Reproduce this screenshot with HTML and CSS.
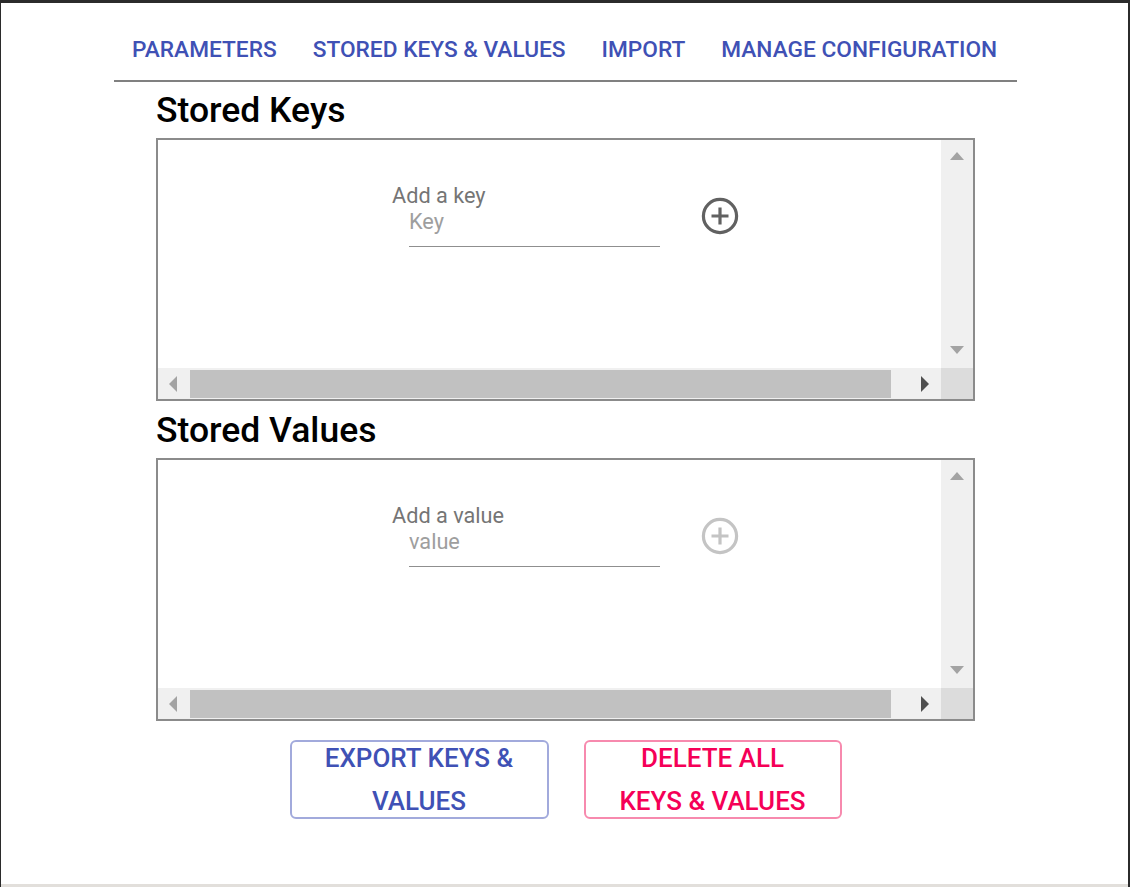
FILE: index.html
```html
<!DOCTYPE html>
<html lang="en">
<head>
<meta charset="utf-8">
<title>Stored Keys &amp; Values</title>
<link rel="stylesheet" href="styles.css">
</head>
<body>
<div class="window">
  <div class="container">
    <nav class="tabs">
      <a class="tab">Parameters</a>
      <a class="tab">Stored Keys &amp; Values</a>
      <a class="tab">Import</a>
      <a class="tab">Manage Configuration</a>
    </nav>
    <main class="content">
      <h2 class="heading heading-first">Stored Keys</h2>
      <div class="scrollbox">
        <div class="scroll-view">
          <div class="entry">
            <div class="field">
              <label class="field-label">Add a key</label>
              <input class="field-input" type="text" placeholder="Key">
            </div>
            <button class="add-btn" type="button" aria-label="Add key">
              <svg class="add-icon" viewBox="0 0 40 40" width="40" height="40"><circle cx="20" cy="20" r="16.6" fill="none" stroke="currentColor" stroke-width="3.2"/><path d="M20 11.5v17M11.5 20h17" stroke="currentColor" stroke-width="3.2" fill="none"/></svg>
            </button>
          </div>
        </div>
        <div class="vscroll"><span class="arr arr-up"></span><span class="arr arr-down"></span></div>
        <div class="hscroll">
          <span class="hbtn"><span class="arr arr-left"></span></span>
          <span class="thumb"></span>
          <span class="hbtn"><span class="arr arr-right"></span></span>
        </div>
        <div class="corner"></div>
      </div>

      <h2 class="heading">Stored Values</h2>
      <div class="scrollbox">
        <div class="scroll-view">
          <div class="entry">
            <div class="field">
              <label class="field-label">Add a value</label>
              <input class="field-input" type="text" placeholder="value">
            </div>
            <button class="add-btn add-btn-disabled" type="button" aria-label="Add value">
              <svg class="add-icon" viewBox="0 0 40 40" width="40" height="40"><circle cx="20" cy="20" r="16.6" fill="none" stroke="currentColor" stroke-width="3.2"/><path d="M20 11.5v17M11.5 20h17" stroke="currentColor" stroke-width="3.2" fill="none"/></svg>
            </button>
          </div>
        </div>
        <div class="vscroll"><span class="arr arr-up"></span><span class="arr arr-down"></span></div>
        <div class="hscroll">
          <span class="hbtn"><span class="arr arr-left"></span></span>
          <span class="thumb"></span>
          <span class="hbtn"><span class="arr arr-right"></span></span>
        </div>
        <div class="corner"></div>
      </div>

      <div class="actions">
        <button class="action action-primary" type="button">Export keys &amp;<br>values</button>
        <button class="action action-danger" type="button">Delete all<br>keys &amp; values</button>
      </div>
    </main>
  </div>
</div>
</body>
</html>
```

FILE: styles.css
```css
html, body {
  margin: 0;
  padding: 0;
}

body {
  background: #2b2b2b;
  font-family: Roboto, "Noto Sans", sans-serif;
}

.window {
  margin: 3px 2px 0 1px;
  height: 881px;
  background: #ffffff;
  border-bottom: 3px solid #e2dfdb;
}

.container {
  width: 903px;
  margin-left: 113px;
}

.tabs {
  display: flex;
  padding-top: 34px;
  border-bottom: 2px solid #808080;
}

.tab {
  flex: none;
  white-space: nowrap;
  padding: 0 18px 17px;
  font-size: 22.7px;
  line-height: 26px;
  font-weight: 500;
  text-transform: uppercase;
  color: #3f51b5;
  cursor: pointer;
}

.content {
  padding: 0 42px;
}

.heading {
  margin: 9px 0 8px;
  font-size: 35.5px;
  line-height: 40px;
  font-weight: 500;
  color: #000;
}

.heading-first {
  margin-top: 8px;
}

.scrollbox {
  height: 263px;
  box-sizing: border-box;
  border: 2px solid #8b8b8b;
  display: grid;
  grid-template-columns: 1fr 32px;
  grid-template-rows: 1fr 31px;
}

.scroll-view {
  overflow: hidden;
}

.entry {
  display: flex;
  align-items: center;
  padding: 44px 0 0 234px;
}

.field {
  width: 268px;
  display: flex;
  flex-direction: column;
}

.field-label {
  font-size: 21.7px;
  line-height: 24px;
  color: #757575;
}

.field-input {
  margin: 2px 0 0 17px;
  width: 251px;
  height: 37px;
  box-sizing: border-box;
  padding: 0 0 13px;
  border: none;
  border-bottom: 1px solid #8f8f8f;
  outline: none;
  background: transparent;
  font-family: inherit;
  font-size: 21.7px;
  line-height: 24px;
  color: #333;
}

.field-input::placeholder {
  color: #9e9e9e;
  opacity: 1;
}

.add-btn {
  margin-left: 40px;
  padding: 0;
  border: none;
  background: none;
  color: #616161;
  display: flex;
  cursor: pointer;
}

.add-btn-disabled {
  color: #c4c4c4;
}

.add-icon {
  display: block;
}

.vscroll {
  background: #f0f0f0;
  display: flex;
  flex-direction: column;
  justify-content: space-between;
  align-items: center;
  padding: 12px 0 14px;
}

.hscroll {
  background: #f0f0f0;
  display: flex;
}

.hbtn {
  width: 32px;
  flex: none;
  display: flex;
  align-items: center;
  justify-content: center;
}

.thumb {
  width: 701px;
  flex: none;
  margin: 2px auto 1px 0;
  background: #c1c1c1;
}

.corner {
  background: #dcdcdc;
}

.arr {
  display: block;
  width: 0;
  height: 0;
}

.arr-up {
  border-left: 7.5px solid transparent;
  border-right: 7.5px solid transparent;
  border-bottom: 8px solid #a3a3a3;
}

.arr-down {
  border-left: 7.5px solid transparent;
  border-right: 7.5px solid transparent;
  border-top: 8px solid #a3a3a3;
}

.arr-left {
  margin-right: 2px;
  border-top: 8px solid transparent;
  border-bottom: 8px solid transparent;
  border-right: 8px solid #a3a3a3;
}

.arr-right {
  border-top: 8px solid transparent;
  border-bottom: 8px solid transparent;
  border-left: 8px solid #4f4f4f;
}

.actions {
  display: flex;
  justify-content: center;
  gap: 35px;
  margin-top: 19px;
}

.action {
  width: 259px;
  height: 79px;
  box-sizing: border-box;
  padding: 0 10px;
  display: flex;
  align-items: center;
  justify-content: center;
  border-radius: 6px;
  background: #fff;
  font-family: inherit;
  font-size: 26px;
  line-height: 43px;
  font-weight: 500;
  text-transform: uppercase;
  white-space: nowrap;
  cursor: pointer;
}

.action-primary {
  border: 2px solid #a2aadc;
  color: #3f51b5;
}

.action-danger {
  width: 258px;
  border: 2px solid #f78aae;
  color: #f50057;
}
```
